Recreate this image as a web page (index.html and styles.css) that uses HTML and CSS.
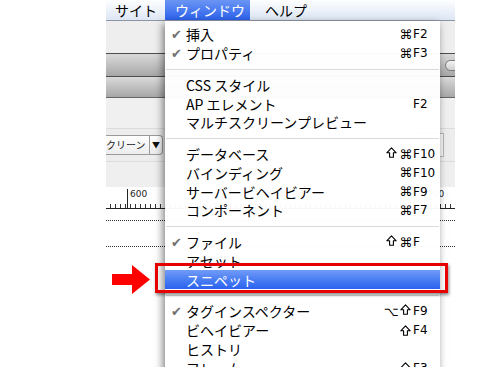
FILE: index.html
```html
<!DOCTYPE html>
<html lang="ja">
<head>
    <meta charset="UTF-8">
    <meta name="viewport" content="width=device-width, initial-scale=1.0">
    <title>ウィンドウメニュー</title>
    <link rel="stylesheet" href="styles.css">
</head>
<body>
    <div class="page">
        <div class="screen">
            <div class="menubar">
                <span class="menubar-item">サイト</span>
                <span class="menubar-item active">ウィンドウ</span>
                <span class="menubar-item">ヘルプ</span>
            </div>

            <!-- 背景のアプリウィンドウ -->
            <div class="app">
                <div class="toolbar"></div>
                <div class="band"><span class="pill"></span></div>
                <div class="band band-sub"></div>
                <div class="panel panel-top"></div>
                <div class="panel panel-mid">
                    <div class="select">
                        <span class="select-text">クリーン</span>
                        <span class="select-btn">▼</span>
                    </div>
                    <div class="field"></div>
                </div>
                <div class="panel panel-low"></div>
                <div class="ruler">
                    <span class="ruler-label">600</span>
                    <span class="ruler-label ruler-label-right">700</span>
                    <div class="ruler-ticks"></div>
                </div>
                <div class="guide"></div>
                <div class="guide guide-second"></div>
            </div>

            <!-- ウィンドウ メニュー -->
            <div class="menu">
                <div class="menu-item"><span class="check">✔</span><span class="label">挿入</span><span class="mods"><span class="mod">⌘</span></span><span class="key">F2</span></div>
                <div class="menu-item"><span class="check">✔</span><span class="label">プロパティ</span><span class="mods"><span class="mod">⌘</span></span><span class="key">F3</span></div>
                <div class="menu-sep"></div>
                <div class="menu-item"><span class="check"></span><span class="label">CSS スタイル</span><span class="mods"></span><span class="key"></span></div>
                <div class="menu-item"><span class="check"></span><span class="label">AP エレメント</span><span class="mods"></span><span class="key">F2</span></div>
                <div class="menu-item"><span class="check"></span><span class="label">マルチスクリーンプレビュー</span><span class="mods"></span><span class="key"></span></div>
                <div class="menu-sep"></div>
                <div class="menu-item"><span class="check"></span><span class="label">データベース</span><span class="mods"><span class="mod"><svg class="shift" width="11" height="11" viewBox="0 0 11 11"><polygon points="5.5,0.8 10.2,5.8 7.4,5.8 7.4,10.3 3.6,10.3 3.6,5.8 0.8,5.8"/></svg></span><span class="mod">⌘</span></span><span class="key">F10</span></div>
                <div class="menu-item"><span class="check"></span><span class="label">バインディング</span><span class="mods"><span class="mod">⌘</span></span><span class="key">F10</span></div>
                <div class="menu-item"><span class="check"></span><span class="label">サーバービヘイビアー</span><span class="mods"><span class="mod">⌘</span></span><span class="key">F9</span></div>
                <div class="menu-item"><span class="check"></span><span class="label">コンポーネント</span><span class="mods"><span class="mod">⌘</span></span><span class="key">F7</span></div>
                <div class="menu-sep"></div>
                <div class="menu-item"><span class="check">✔</span><span class="label">ファイル</span><span class="mods"><span class="mod"><svg class="shift" width="11" height="11" viewBox="0 0 11 11"><polygon points="5.5,0.8 10.2,5.8 7.4,5.8 7.4,10.3 3.6,10.3 3.6,5.8 0.8,5.8"/></svg></span><span class="mod">⌘</span></span><span class="key">F</span></div>
                <div class="menu-item"><span class="check"></span><span class="label">アセット</span><span class="mods"></span><span class="key"></span></div>
                <div class="menu-item selected"><span class="check"></span><span class="label">スニペット</span><span class="mods"></span><span class="key"></span></div>
                <div class="menu-sep"></div>
                <div class="menu-item"><span class="check">✔</span><span class="label">タグインスペクター</span><span class="mods"><span class="mod">⌥</span><span class="mod"><svg class="shift" width="11" height="11" viewBox="0 0 11 11"><polygon points="5.5,0.8 10.2,5.8 7.4,5.8 7.4,10.3 3.6,10.3 3.6,5.8 0.8,5.8"/></svg></span></span><span class="key">F9</span></div>
                <div class="menu-item"><span class="check"></span><span class="label">ビヘイビアー</span><span class="mods"><span class="mod"><svg class="shift" width="11" height="11" viewBox="0 0 11 11"><polygon points="5.5,0.8 10.2,5.8 7.4,5.8 7.4,10.3 3.6,10.3 3.6,5.8 0.8,5.8"/></svg></span></span><span class="key">F4</span></div>
                <div class="menu-item"><span class="check"></span><span class="label">ヒストリ</span><span class="mods"></span><span class="key"></span></div>
                <div class="menu-item"><span class="check"></span><span class="label">フレーム</span><span class="mods"><span class="mod"><svg class="shift" width="11" height="11" viewBox="0 0 11 11"><polygon points="5.5,0.8 10.2,5.8 7.4,5.8 7.4,10.3 3.6,10.3 3.6,5.8 0.8,5.8"/></svg></span></span><span class="key">F3</span></div>
            </div>
        </div>

        <!-- 注釈 -->
        <svg class="arrow" width="38" height="29" viewBox="0 0 38 29">
            <polygon points="0,9 20,9 20,0 38,14.5 20,29 20,20 0,20" fill="#ff0000"/>
        </svg>
        <div class="callout"></div>
    </div>
</body>
</html>
```

FILE: styles.css
```css
body {
    margin: 0;
    background-color: #fff;
    font-family: "Noto Sans CJK JP", sans-serif;
}
.page {
    position: relative;
    width: 500px;
    height: 367px;
    overflow: hidden;
}
.screen {
    position: relative;
    margin-left: 106px;
    width: 349px;
    height: 367px;
    overflow: hidden;
}

/* メニューバー */
.menubar {
    display: flex;
    height: 20px;
    padding-left: 9px;
    background: linear-gradient(#fdfeff, #dde6f4);
    border-bottom: 1px solid #8f96a3;
}
.menubar-item {
    font-size: 14px;
    line-height: 20px;
    color: #000;
    padding-right: 8px;
}
.menubar-item.active {
    width: 75px;
    padding-left: 10px;
    padding-right: 0;
    margin-right: 15px;
    color: #fff;
    background: linear-gradient(#6b95f4, #2c62ec);
}

/* 背景のアプリウィンドウ */
.toolbar {
    height: 32px;
    background-color: #eeeeee;
}
.band {
    display: flex;
    justify-content: flex-end;
    align-items: center;
    height: 22px;
    border-top: 1px solid #4d4d4d;
    background: linear-gradient(#dadada, #a7a7a7);
}
.band-sub {
    height: 20px;
}
.pill {
    width: 20px;
    height: 9px;
    margin-right: -12px;
    border: 1px solid #7a7a7a;
    border-radius: 6px;
    background: linear-gradient(#f4f4f4, #cfcfcf);
}
.panel {
    background-color: #f0f0f0;
}
.panel-top {
    height: 30px;
    border-top: 1px solid #666;
    border-bottom: 1px solid #dcdcdc;
}
.panel-mid {
    display: flex;
    align-items: center;
    justify-content: space-between;
    height: 32px;
    background-color: #ededed;
    border-bottom: 1px solid #dcdcdc;
}
.select {
    display: flex;
    height: 18px;
    width: 56px;
    border: 1px solid #9a9a9a;
    border-left: none;
    border-radius: 0 4px 4px 0;
    background: linear-gradient(#ffffff, #ececec);
}
.select-text {
    flex: 1;
    font-size: 10px;
    line-height: 18px;
    color: #222;
    white-space: nowrap;
}
.select-btn {
    width: 12px;
    border-left: 1px solid #9a9a9a;
    font-size: 8px;
    line-height: 18px;
    text-align: center;
    color: #111;
}
.field {
    width: 30px;
    height: 22px;
    margin-right: 11px;
    border: 1px solid #b5b5b5;
    background-color: #f7f7f7;
}
.panel-low {
    height: 25px;
    background-color: #efefef;
}
.ruler {
    position: relative;
    height: 21px;
    background-color: #fff;
    border-bottom: 1px solid #222;
}
.ruler-label {
    position: absolute;
    left: 21px;
    top: 2px;
    padding-left: 2px;
    border-left: 1px solid #222;
    height: 19px;
    font-family: "DejaVu Sans", sans-serif;
    font-size: 9px;
    line-height: 11px;
    color: #222;
}
.ruler-label-right {
    left: 318px;
}
.ruler-ticks {
    position: absolute;
    left: 0;
    right: 0;
    bottom: 0;
    height: 4px;
    background-image: repeating-linear-gradient(90deg, transparent 0, transparent 4px, #333 4px, #333 5px);
}
.guide {
    margin-top: 11px;
    border-top: 1px dotted #333;
}
.guide-second {
    margin-top: 25px;
}

/* ウィンドウ メニュー */
.menu {
    position: absolute;
    left: 59px;
    top: 21px;
    width: 275px;
    padding-top: 4px;
    padding-bottom: 10px;
    background-color: rgba(255, 255, 255, 0.97);
    box-shadow: -2px 3px 8px rgba(0, 0, 0, 0.5);
}
.menu-item {
    display: flex;
    align-items: center;
    height: 18.75px;
    font-size: 14px;
    color: #000;
}
.menu-item.selected {
    color: #fff;
    background: linear-gradient(#729bf7, #4a7ef3 50%, #2b62ee);
}
.check {
    width: 15px;
    padding-left: 6px;
    font-family: "DejaVu Sans", sans-serif;
    font-size: 13px;
    color: #707070;
}
.label {
    flex: 1;
    white-space: nowrap;
}
.mods {
    display: flex;
    justify-content: flex-end;
}
.mod {
    display: flex;
    justify-content: center;
    width: 14.5px;
    font-family: "DejaVu Sans", sans-serif;
    font-size: 13px;
}
.shift {
    fill: none;
    stroke: #000;
    stroke-width: 1.1;
    stroke-linejoin: round;
}
.key {
    width: 27px;
    font-family: "DejaVu Sans", sans-serif;
    font-size: 12px;
}
.menu-sep {
    height: 13px;
    display: flex;
    align-items: center;
}
.menu-sep::before {
    content: "";
    flex: 1;
    margin: 0 1px;
    border-top: 1px solid #dadada;
}

/* 注釈 */
.arrow {
    position: absolute;
    left: 112px;
    top: 265px;
}
.callout {
    position: absolute;
    left: 155px;
    top: 263px;
    width: 287px;
    height: 24px;
    border: 3px solid #e60000;
    box-shadow: 1px 2px 3px rgba(0, 0, 0, 0.45);
}
```
